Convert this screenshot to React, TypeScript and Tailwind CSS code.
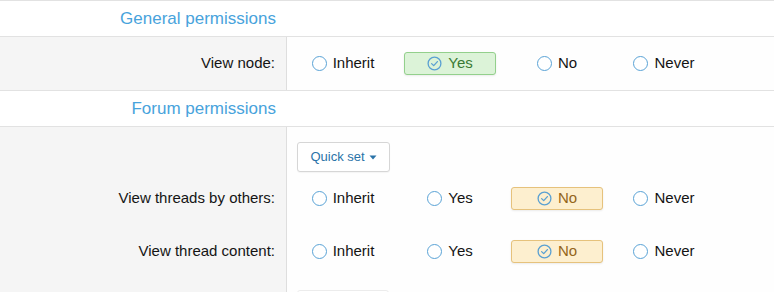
import React from "react";

type Opt = "Inherit" | "Yes" | "No" | "Never";

function Radio() {
  return (
    <span className="block w-[15px] h-[15px] rounded-full border-[1.5px] border-[#5aa3d6] bg-white shrink-0" />
  );
}

function Check() {
  return (
    <svg width="15" height="15" viewBox="0 0 15 15" className="shrink-0">
      <circle cx="7.5" cy="7.5" r="6.4" fill="none" stroke="#5aa0d2" strokeWidth="1.3" />
      <path d="M4.6 7.6 L6.7 9.6 L10.4 5.6" fill="none" stroke="#5aa0d2" strokeWidth="1.3" strokeLinecap="round" strokeLinejoin="round" />
    </svg>
  );
}

function Option({ label, selected }: { label: Opt; selected?: "green" | "orange" }) {
  const base = "w-[92px] h-[23px] flex items-center justify-center gap-[6px] rounded-[3px] border text-[15px]";
  if (selected === "green") {
    return (
      <div className={`${base} bg-[#dcf3d8] border-[#93d08c] text-[#3a7a34] shadow-[0_1px_2px_rgba(0,0,0,0.08)]`}>
        <Check />
        <span>{label}</span>
      </div>
    );
  }
  if (selected === "orange") {
    return (
      <div className={`${base} bg-[#fdefcf] border-[#e6c27c] text-[#94651a] shadow-[0_1px_2px_rgba(0,0,0,0.08)]`}>
        <Check />
        <span>{label}</span>
      </div>
    );
  }
  return (
    <div className={`${base} border-transparent text-[#141414]`}>
      <Radio />
      <span>{label}</span>
    </div>
  );
}

function Options({ sel, color }: { sel: Opt; color: "green" | "orange" }) {
  const opts: Opt[] = ["Inherit", "Yes", "No", "Never"];
  return (
    <div className="flex gap-[15px]">
      {opts.map((o) => (
        <Option key={o} label={o} selected={o === sel ? color : undefined} />
      ))}
    </div>
  );
}

function Header({ title }: { title: string }) {
  return (
    <div className="flex h-[36px] items-center bg-white border-b border-[#e2e2e2]">
      <div className="w-[286px] pr-[10px] text-right text-[17px] text-[#48a3dc]">{title}</div>
    </div>
  );
}

function Row({ label, children }: { label: string; children: React.ReactNode }) {
  return (
    <div className="flex h-[53px]">
      <div className="w-[287px] border-r border-[#dedede] bg-[#f5f5f5] flex items-center justify-end pr-[11px] text-[15px] text-[#141414]">
        {label}
      </div>
      <div className="flex-1 flex items-center pl-[10px] bg-[#fefefe]">{children}</div>
    </div>
  );
}

export default function App() {
  return (
    <div
      className="w-[774px] h-[292px] overflow-hidden bg-white border-t border-[#e2e2e2]"
      style={{ fontFamily: '"Liberation Sans", Arial, sans-serif' }}
    >
      <Header title="General permissions" />
      <div className="border-b border-[#e2e2e2]">
        <Row label="View node:">
          <Options sel="Yes" color="green" />
        </Row>
      </div>
      <Header title="Forum permissions" />
      <div className="flex">
        <div className="w-[287px] border-r border-[#dedede] bg-[#f5f5f5] flex flex-col">
          <div className="h-[45px] shrink-0" />
          <div className="h-[53px] shrink-0 flex items-center justify-end pr-[11px] text-[15px] text-[#141414]">
            View threads by others:
          </div>
          <div className="h-[53px] shrink-0 flex items-center justify-end pr-[11px] text-[15px] text-[#141414]">
            View thread content:
          </div>
          <div className="h-[40px] shrink-0" />
        </div>
        <div className="flex-1 bg-[#fefefe] pl-[10px] flex flex-col">
          <div className="pt-[15px]">
            <button className="w-[93px] h-[30px] rounded-[3px] border border-[#d6d6d6] bg-white text-[13px] text-[#2a73a8] flex items-center justify-center gap-[4px] shadow-[0_1px_1px_rgba(0,0,0,0.04)]">
              <span>Quick set</span>
              <svg width="8" height="5" viewBox="0 0 8 5">
                <path d="M0.5 0.5 L7.5 0.5 L4 4.5 Z" fill="#2a73a8" />
              </svg>
            </button>
          </div>
          <div className="h-[53px] flex items-center">
            <Options sel="No" color="orange" />
          </div>
          <div className="h-[53px] flex items-center">
            <Options sel="No" color="orange" />
          </div>
          <div className="pt-[12px]">
            <div className="w-[92px] h-[20px] rounded-[3px] border border-[#ececec] bg-white" />
          </div>
        </div>
      </div>
    </div>
  );
}
